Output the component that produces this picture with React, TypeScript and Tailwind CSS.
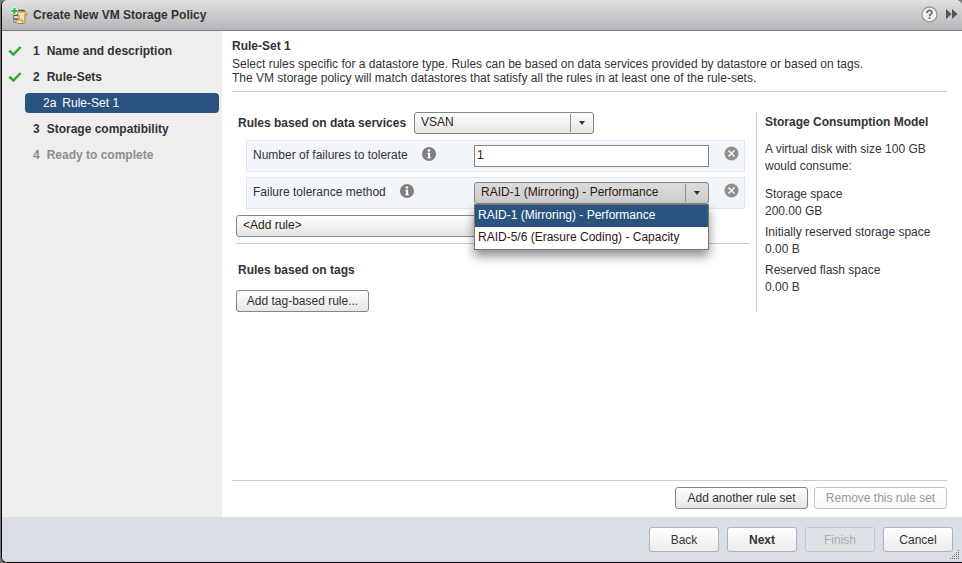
import type { ReactNode } from "react";

const comboClass =
  "h-[22px] w-full appearance-none rounded-[3px] border border-[#858585] bg-linear-to-b pr-7 pb-0.5 pl-1.5 text-xs text-[#2b1a0e] outline-none";

function Combo({
  id,
  label,
  options,
  pressed = false,
  children,
}: {
  id: string;
  label?: string;
  options: string[];
  pressed?: boolean;
  children?: ReactNode;
}) {
  return (
    <div className="relative">
      <select
        id={id}
        aria-label={label}
        className={
          pressed
            ? `${comboClass} from-[#dcdcdc] to-[#cdcdcd]`
            : `${comboClass} from-white to-[#e4e4e4]`
        }
      >
        {options.map((o) => (
          <option key={o}>{o}</option>
        ))}
      </select>
      <span className="pointer-events-none absolute inset-y-0.5 right-0 flex w-6 items-center justify-center border-l border-[#8f8f8f] pr-0.5">
        <svg width="6" height="4" viewBox="0 0 6 4" aria-hidden="true">
          <path d="M0 0h6L3 4z" fill="#333" />
        </svg>
      </span>
      {children}
    </div>
  );
}

function InfoIcon() {
  return (
    <svg className="mb-0.5 shrink-0" width="14" height="14" viewBox="0 0 14 14" aria-hidden="true">
      <circle cx="7" cy="7" r="7" fill="#808080" />
      <circle cx="7" cy="3.5" r="1.3" fill="#fff" />
      <path d="M5.3 5.7h2.8v4.500h.8v1H5.200v-1H6V6.700h-.7z" fill="#fff" />
    </svg>
  );
}

function RemoveButton({ label }: { label: string }) {
  return (
    <button type="button" aria-label={label} className="mb-1.5 shrink-0">
      <svg className="block" width="15" height="15" viewBox="0 0 15 15" aria-hidden="true">
        <circle cx="7.5" cy="7.5" r="7" fill="#8f8f8f" />
        <path d="M4.500 4.500l6 6M10.500 4.500l-6 6" stroke="#fff" strokeWidth="1.400" />
      </svg>
    </button>
  );
}

function RuleRow({ id, label, children }: { id: string; label: string; children: ReactNode }) {
  return (
    <div className="mr-[5px] ml-2.5 flex h-8 items-center border border-[#dfe7f1] bg-[#f2f6fb] pr-[5px] pl-1.5">
      <div className="flex w-[221px] items-center gap-3.5 pb-0.5">
        <label htmlFor={id}>{label}</label>
        <InfoIcon />
      </div>
      <div className="w-[235px]">{children}</div>
      <div className="flex flex-1 justify-end">
        <RemoveButton label={`Remove ${label}`} />
      </div>
    </div>
  );
}

function SmallButton({ children, disabled = false }: { children: ReactNode; disabled?: boolean }) {
  return (
    <button
      type="button"
      disabled={disabled}
      className="h-[22px] min-w-[133px] rounded-[3px] border border-[#858585] bg-linear-to-b from-white to-[#e6e6e6] px-2 whitespace-nowrap disabled:border-[#c4c4c4] disabled:to-[#f8f8f8] disabled:text-[#999]"
    >
      {children}
    </button>
  );
}

function FooterButton({
  children,
  disabled = false,
  primary = false,
}: {
  children: ReactNode;
  disabled?: boolean;
  primary?: boolean;
}) {
  return (
    <button
      type="button"
      disabled={disabled}
      className={`h-[25px] w-[70px] rounded-[3px] border border-[#b0b4b9] bg-linear-to-b from-white to-[#ececec] disabled:border-[#c0c5cb] disabled:from-[#dfe3e8] disabled:to-[#dfe3e8] disabled:text-[#aaaeb3] ${primary ? "font-bold" : ""}`}
    >
      {children}
    </button>
  );
}

function Check() {
  return (
    <svg width="14" height="12" viewBox="0 0 14 12" aria-hidden="true">
      <path d="M1.200 5.600l4.200 3.900L12.600 2" fill="none" stroke="#38a82c" strokeWidth="2.500" />
    </svg>
  );
}

function PolicyIcon() {
  return (
    <svg className="mt-px" width="18" height="18" viewBox="0 0 18 18" aria-hidden="true">
      <path d="M3 3.500h11.500v12H4z" fill="#dcdcdc" stroke="#777" />
      <path d="M7 3.500h7.500M4 8.500h4M4 12h4" stroke="#555" strokeWidth="1.300" />
      <path d="M5 6.500h4M5 10.200h2M5 14h2" stroke="#fff" />
      <path
        d="M7.500 6.500Q7.500 5 9 5h6.500Q17 5 17 6.800V8h-2v6.500q0 2-1.700 2H7.500Q6 16.500 6 14.500V13h3V8H7.500z"
        fill="#f8e3a8"
        stroke="#a8853c"
      />
      <path d="M9 13h3.500q0 3 1 3.500M15 8V6.500" fill="none" stroke="#a8853c" />
      <path d="M4.500.5v7M1 4h7" stroke="#e9ffe9" strokeWidth="3.500" />
      <path d="M4.500 1v6M1.500 4h6" stroke="#2bb544" strokeWidth="2" />
    </svg>
  );
}

const steps = [
  { num: "1", name: "Name and description", done: true, ready: true },
  { num: "2", name: "Rule-Sets", done: true, ready: true },
  { num: "2a", name: "Rule-Set 1", current: true },
  { num: "3", name: "Storage compatibility", ready: true },
  { num: "4", name: "Ready to complete" },
];

const usage = [
  ["Storage space", "200.00 GB"],
  ["Initially reserved storage space", "0.00 B"],
  ["Reserved flash space", "0.00 B"],
];

const methods = ["RAID-1 (Mirroring) - Performance", "RAID-5/6 (Erasure Coding) - Capacity"];

export default function App() {
  return (
    <div className="min-h-screen bg-[#777] pl-px font-['Liberation_Sans',Arial,sans-serif] text-xs text-[#333]">
      <div className="flex min-h-screen flex-col overflow-hidden rounded-l-md rounded-tr-md border-b border-l border-black bg-white">
        <header className="flex h-[31px] items-center border-b border-[#7d7d7d] bg-linear-to-b from-[#e0e0e2] to-[#b5b6b9] pr-1 pl-2">
          <PolicyIcon />
          <h1 className="ml-[5px] flex-1 font-bold">Create New VM Storage Policy</h1>
          <button type="button" aria-label="Help" className="mb-0.5">
            <svg width="17" height="17" viewBox="0 0 17 17" aria-hidden="true">
              <circle cx="8.500" cy="8.500" r="7.500" fill="#f1f1f1" stroke="#9a9a9a" strokeWidth="1.300" />
              <path d="M6.100 7V6.500a2.400 2.100 0 1 1 3.700 1.700Q8.500 9 8.500 10.200" fill="none" stroke="#666" strokeWidth="1.700" />
              <path d="M7.600 11.300h1.800v1.700H7.600z" fill="#666" />
            </svg>
          </button>
          <button type="button" aria-label="Collapse" className="mb-0.5 ml-2">
            <svg width="12" height="10" viewBox="0 0 12 10" aria-hidden="true">
              <path d="M0 0l5.500 5L0 10zM6 0l5.500 5L6 10z" fill="#555" />
            </svg>
          </button>
        </header>

        <div className="flex flex-1">
          <nav className="w-[220px] shrink-0 bg-[#eee] pt-[7px]">
            <ol>
              {steps.map((s) => (
                <li key={s.num} className="flex h-[26px] items-center">
                  {s.current ? (
                    <a
                      href="#rule-set-1"
                      aria-current="step"
                      className="mr-[3px] ml-[23px] flex h-5 flex-1 items-center gap-1.5 rounded-[4px] bg-[#2a547f] pl-[18px] text-white"
                    >
                      <span>{s.num}</span>
                      <span>{s.name}</span>
                    </a>
                  ) : (
                    <>
                      <span className="flex w-[31px] pl-1.5">{s.done && <Check />}</span>
                      <span
                        className={
                          s.ready ? "flex gap-[7px] font-bold" : "flex gap-[7px] font-bold text-[#8d8d8d]"
                        }
                      >
                        <span>{s.num}</span>
                        <span>{s.name}</span>
                      </span>
                    </>
                  )}
                </li>
              ))}
            </ol>
          </nav>

          <main className="flex min-w-0 flex-1 flex-col pt-2 pr-[15px] pb-2 pl-2.5">
            <h2 className="leading-[14px] font-bold">Rule-Set 1</h2>
            <p className="mt-1 border-b border-[#ccc] pb-1.5 leading-[14px]">
              Select rules specific for a datastore type. Rules can be based on data services provided by
              datastore or based on tags.
              <br />
              The VM storage policy will match datastores that satisfy all the rules in at least one of the
              rule-sets.
            </p>

            <div className="mt-5 flex flex-1 items-start">
              <section className="min-w-0 flex-1 pl-1">
                <div className="flex items-center pl-0.5">
                  <label htmlFor="services" className="w-44 font-bold">
                    Rules based on data services
                  </label>
                  <div className="w-[180px]">
                    <Combo id="services" options={["VSAN"]} />
                  </div>
                </div>
                <div className="mt-1.5 flex flex-col gap-[5px]">
                  <RuleRow id="failures" label="Number of failures to tolerate">
                    <input
                      id="failures"
                      type="text"
                      defaultValue="1"
                      className="block h-[22px] w-full border border-[#858585] bg-white px-0.5 pb-0.5 text-[#2b1a0e] outline-none"
                    />
                  </RuleRow>
                  <RuleRow id="method" label="Failure tolerance method">
                    <Combo id="method" options={methods} pressed>
                      <ul
                        role="listbox"
                        aria-label="Methods"
                        className="absolute inset-x-0 top-full z-10 border border-[#777] bg-white shadow-[0_6px_10px_rgba(0,0,0,0.45)]"
                      >
                        {methods.map((m, i) => (
                          <li
                            key={m}
                            role="option"
                            aria-selected={i === 0}
                            className="flex h-[22px] items-center px-[3px] pb-0.5 whitespace-nowrap text-[#2b1a0e] aria-selected:bg-[#2a547f] aria-selected:text-white"
                          >
                            {m}
                          </li>
                        ))}
                      </ul>
                    </Combo>
                  </RuleRow>
                </div>
                <div className="mt-1.5 border-b border-[#ccc] pb-1.5">
                  <div className="w-[470px]">
                    <Combo id="add-rule" label="Add rule" options={["<Add rule>"]} />
                  </div>
                </div>
                <h3 className="mt-[18px] mb-3 pl-0.5 font-bold">Rules based on tags</h3>
                <SmallButton>Add tag-based rule...</SmallButton>
              </section>

              <aside className="ml-1.5 h-[200px] w-[191px] shrink-0 border-l border-[#ccc] pt-0.5 pl-2">
                <h3 className="leading-4 font-bold">Storage Consumption Model</h3>
                <p className="mt-[11px] mb-[11px] leading-[17px]">
                  A virtual disk with size 100 GB
                  <br />
                  would consume:
                </p>
                <dl className="flex flex-col gap-1 leading-[17px]">
                  {usage.map(([k, v]) => (
                    <div key={k}>
                      <dt>{k}</dt>
                      <dd>{v}</dd>
                    </div>
                  ))}
                </dl>
              </aside>
            </div>

            <div className="flex justify-end gap-1.5 border-t border-[#ccc] pt-1.5">
              <SmallButton>Add another rule set</SmallButton>
              <SmallButton disabled>Remove this rule set</SmallButton>
            </div>
          </main>
        </div>

        <footer className="relative flex h-[45px] items-center justify-end gap-2 bg-[#d9dde5] pr-[9px]">
          <FooterButton>Back</FooterButton>
          <FooterButton primary>Next</FooterButton>
          <FooterButton disabled>Finish</FooterButton>
          <FooterButton>Cancel</FooterButton>
          <svg className="absolute right-0.5 bottom-0.5" width="10" height="10" viewBox="0 0 10 10" aria-hidden="true">
            <path
              d="M8 0h1v1H8zM6 2h1v1H6zM8 2h1v1H8zM4 4h1v1H4zM6 4h1v1H6zM8 4h1v1H8zM2 6h1v1H2zM4 6h1v1H4zM6 6h1v1H6zM8 6h1v1H8zM0 8h1v1H0zM2 8h1v1H2zM4 8h1v1H4zM6 8h1v1H6zM8 8h1v1H8z"
              fill="#777"
            />
          </svg>
        </footer>
      </div>
    </div>
  );
}
